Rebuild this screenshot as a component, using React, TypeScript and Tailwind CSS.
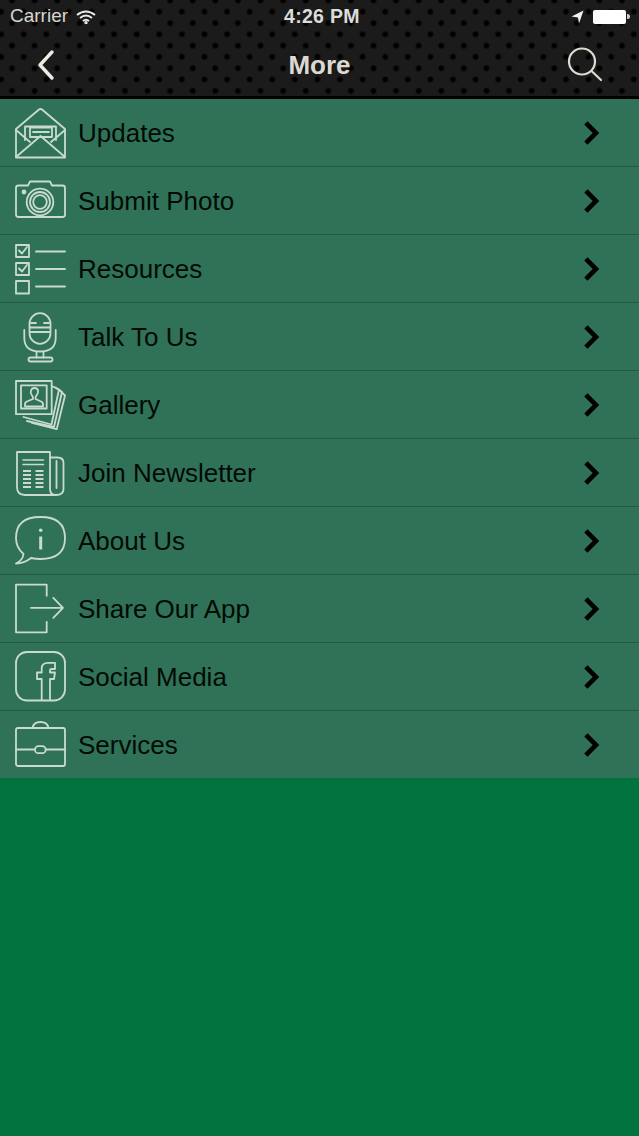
import React from 'react';

const Icon: React.FC<{ children: React.ReactNode }> = ({ children }) => (
  <svg width="54" height="54" viewBox="0 0 54 54" fill="none" stroke="#c9dbd1" strokeWidth="1.8" strokeLinejoin="round" strokeLinecap="round" className="shrink-0">
    {children}
  </svg>
);

const UpdatesIcon = () => (
  <Icon>
    <path d="M3 23 L26 3.5 Q27.5 2.5 29 3.5 L52 23 V51.5 H3 Z" />
    <path d="M3 51 L27.5 30 L52 51" />
    <path d="M3 24 L17 36 M52 24 L38 36" />
    <path d="M12 34 V20.5 H43 V34" />
    <rect x="17" y="21.5" width="22" height="9.5" />
    <path d="M20 26 H36" />
  </Icon>
);

const CameraIcon = () => (
  <Icon>
    <path d="M3 14 Q3 11.5 5.5 11.5 H15 L17 7.5 H37 L39 11.5 H49.5 Q52 11.5 52 14 V40.5 Q52 43 49.5 43 H5.5 Q3 43 3 40.5 Z" />
    <circle cx="27" cy="28" r="13.3" />
    <circle cx="27" cy="28" r="10" />
    <circle cx="27" cy="28" r="6.8" />
    <circle cx="11" cy="18" r="1.5" fill="#c9dbd1" />
  </Icon>
);

const ListIcon = () => (
  <Icon>
    <rect x="3" y="3" width="13" height="12" />
    <rect x="3" y="21" width="13" height="12" />
    <rect x="3" y="39" width="13" height="12.5" />
    <path d="M6 8.5 L9 11.5 L14 5 M6 26.5 L9 29.5 L14 23" />
    <path d="M23 9.5 H52 M23 27 H52 M23 44.5 H52" />
  </Icon>
);

const MicIcon = () => (
  <Icon>
    <rect x="16.5" y="3.2" width="21" height="30.6" rx="10.5" />
    <path d="M11.3 20 V28 Q11.3 41.5 27 41.5 Q42.7 41.5 42.7 28 V20" />
    <path d="M18 13 H23 M31 13 H36 M17 17.5 H37 M17 22 H37" />
    <path d="M23.5 41.5 V47.5 M30.5 41.5 V47.5" />
    <rect x="15.5" y="47.5" width="24" height="4" rx="2" />
  </Icon>
);

const GalleryIcon = () => (
  <Icon>
    <rect x="3" y="3" width="35.7" height="33.2" />
    <rect x="8" y="7.3" width="25.7" height="23.2" />
    <path d="M38.7 8 L46 11.5 L38.5 46.5 L10.5 39" />
    <path d="M42.5 9.5 L49 14 L41 49 L14 43" />
    <path d="M46.5 12 L52 17.5 L43.7 51.2 L19 45" />
    <path d="M12 28.5 V26 Q12 24 15 23 L20 21 Q20.5 19.5 19 17.5 Q17 15 18 12.5 Q19 10 21 10 Q25 10 25 13 Q25.5 15 23.5 17.5 Q22 19.5 22.5 21 L27 23 Q30 24 30 26 V28.5 Z" />
  </Icon>
);

const NewsIcon = () => (
  <Icon>
    <path d="M4 6 H37 V43 Q37 49 43 49 H12 Q4 49 4 41 Z" />
    <path d="M37 11.5 H44.5 Q50.5 11.5 50.5 17 V43 Q50.5 49 43 49" />
    <path d="M43.5 15 V42" />
    <path d="M10 14 H30.5 M10 18.5 H30.5" strokeWidth="1.5" />
    <path d="M10 25 H18 M10 29 H18 M10 33 H18 M10 37 H18 M10 41 H18 M22.5 25 H30.5 M22.5 29 H30.5 M22.5 33 H30.5 M22.5 37 H30.5 M22.5 41 H30.5" strokeWidth="2" strokeLinecap="butt" />
  </Icon>
);

const InfoIcon = () => (
  <Icon>
    <path d="M3 49.5 Q10 46 10.5 40 Q3 33.5 3 24 Q3 3 27.5 3 Q52 3 52 24 Q52 45 27.5 45 Q22.5 45 18 44 Q11 49.5 3 49.5 Z" />
    <path d="M27.7 22.5 V35.5" strokeWidth="3" strokeLinecap="butt" />
    <circle cx="27.7" cy="16.2" r="1.8" fill="#c9dbd1" stroke="none" />
  </Icon>
);

const ShareIcon = () => (
  <Icon>
    <path d="M33.7 13.8 V2.7 H3 V50.3 H33.7 V39.8" />
    <path d="M18 25.8 H50 M40.3 15.8 L50 25.8 L40.3 35.8" />
  </Icon>
);

const FacebookIcon = () => (
  <Icon>
    <rect x="3" y="2" width="49" height="48.5" rx="11" />
    <path d="M28.7 50 V29 H24 V22.5 H28.7 V18.5 Q28.7 12.8 35 12.8 H42 V19 H38.5 Q37 19 37 21 V22.5 H42 L41 29 H37 V50" />
  </Icon>
);

const CaseIcon = () => (
  <Icon>
    <rect x="3" y="10" width="49" height="38" rx="2" />
    <path d="M3 31.5 H22 M32.7 31.5 H52" />
    <path d="M19.5 10 Q20.5 4 27.5 4 Q34.5 4 35.5 10" />
    <rect x="22" y="28.2" width="10.7" height="7" rx="3.5" />
  </Icon>
);

const rows = [
  { label: 'Updates', icon: UpdatesIcon },
  { label: 'Submit Photo', icon: CameraIcon },
  { label: 'Resources', icon: ListIcon },
  { label: 'Talk To Us', icon: MicIcon },
  { label: 'Gallery', icon: GalleryIcon },
  { label: 'Join Newsletter', icon: NewsIcon },
  { label: 'About Us', icon: InfoIcon },
  { label: 'Share Our App', icon: ShareIcon },
  { label: 'Social Media', icon: FacebookIcon },
  { label: 'Services', icon: CaseIcon },
];

const App: React.FC = () => {
  return (
    <div className="w-[639px] h-[1136px] overflow-hidden bg-[#00733f] font-['Liberation_Sans',Arial,sans-serif]">
      <header className="h-[99px] border-b-[3px] border-black bg-[#1b1b1c] bg-[radial-gradient(circle,#000_1.9px,transparent_3.7px),radial-gradient(circle,#000_1.9px,transparent_3.7px)] bg-[length:22.6px_22.6px] bg-[position:0.7px_-10.8px,-10.2px_0.4px] flex flex-col">
        <div className="h-[33px] pl-[10px] pr-[9px] flex items-center justify-between text-[#d6d6d2] relative">
          <div className="flex items-center gap-[8px] text-[19px]">
            <span>Carrier</span>
            <svg width="20" height="14" viewBox="0 0 20 14" fill="none" stroke="#e8e8e4" strokeWidth="2" strokeLinecap="butt">
              <path d="M1 5 Q10 -2 19 5" />
              <path d="M4 8 Q10 3 16 8" />
              <path d="M7 11 Q10 8.5 13 11" />
              <circle cx="10" cy="12.6" r="0.7" fill="#e8e8e4" />
            </svg>
          </div>
          <span className="absolute left-[284px] top-[5px] text-[19.5px] leading-[22px] font-bold tracking-[0.3px] text-[#dcdcd8]">4:26 PM</span>
          <div className="flex items-center gap-[9px]">
            <svg width="13" height="14" viewBox="0 0 13 14" fill="#f2f2ee">
              <path d="M0.5 6.5 L12.5 0.5 L8 13.5 L7 7.5 Z" />
            </svg>
            <div className="flex items-center">
              <div className="w-[33px] h-[14px] rounded-[2px] bg-white" />
              <div className="w-[3px] h-[5px] bg-[#cfcfcf] rounded-r-sm ml-px" />
            </div>
          </div>
        </div>
        <div className="relative flex-1 flex items-center justify-between pl-[36px] pr-[36px]">
          <svg width="20" height="32" viewBox="0 0 20 32" fill="none" stroke="#efebe2" strokeWidth="3.4" strokeLinecap="round" strokeLinejoin="round">
            <path d="M16 3 L4 16 L16 29" />
          </svg>
          <span className="absolute left-0 right-0 text-center text-[26px] font-bold text-[#ddd9d0] top-[14px] leading-[36px]">More</span>
          <svg width="36" height="36" viewBox="0 0 36 36" fill="none" stroke="#dedbd2" strokeWidth="2.2" strokeLinecap="round">
            <circle cx="15" cy="14.5" r="13" />
            <path d="M24.5 24 L34 33" />
          </svg>
        </div>
      </header>
      <ul className="bg-[#307257] h-[679px]">
        {rows.map((row, i) => (
          <li
            key={row.label}
            className={`h-[68px] pl-[13px] pr-[38px] flex items-center border-b ${i < rows.length - 1 ? 'border-[#235843]' : 'border-transparent'}`}
          >
            <row.icon />
            <span className="ml-[11px] flex-1 text-[26px] text-[#020a06] leading-none">{row.label}</span>
            <svg width="18" height="24" viewBox="0 0 18 24" fill="none" stroke="#000" strokeWidth="4.6" strokeLinecap="square">
              <path d="M4.5 3.5 L13 12 L4.5 20.5" />
            </svg>
          </li>
        ))}
      </ul>
    </div>
  );
};

export default App;
